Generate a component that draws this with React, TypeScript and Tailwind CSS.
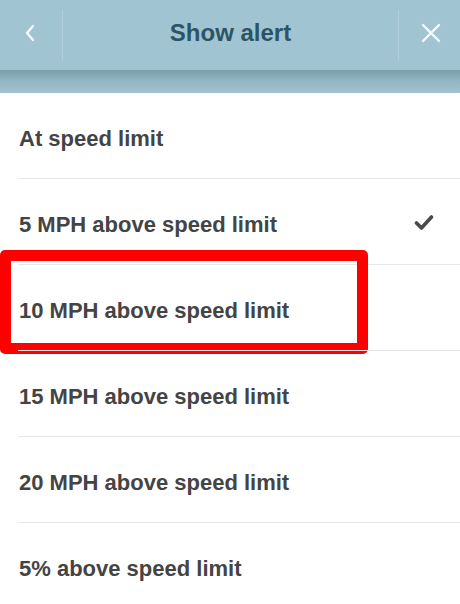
import React from "react";

const items = [
  { label: "At speed limit", checked: false },
  { label: "5 MPH above speed limit", checked: true },
  { label: "10 MPH above speed limit", checked: false, highlight: true },
  { label: "15 MPH above speed limit", checked: false },
  { label: "20 MPH above speed limit", checked: false },
  { label: "5% above speed limit", checked: false },
];

export default function App() {
  return (
    <div
      className="w-[460px] h-[604px] overflow-hidden bg-white"
      style={{ fontFamily: '"Liberation Sans", Arial, sans-serif' }}
    >
      <div className="h-[70px] bg-[#a1c4d2] flex items-center pb-[5px]">
        <div className="w-[62px] h-full flex items-center justify-center">
          <svg width="14" height="18" viewBox="0 0 14 18" className="ml-[-2px]">
            <path d="M10 2 L4 9 L10 16" fill="none" stroke="#f4fafc" strokeWidth="2.4" strokeLinecap="round" strokeLinejoin="round" />
          </svg>
        </div>
        <div className="w-px h-[50px] bg-[#b2d0db] mt-[5px]" />
        <div className="flex-1 text-center text-[24px] font-bold text-[#2d5465]">Show alert</div>
        <div className="w-px h-[50px] bg-[#b2d0db] mt-[5px]" />
        <div className="w-[61px] h-full flex items-center justify-center">
          <svg width="20" height="20" viewBox="0 0 20 20" className="ml-[2px]">
            <path d="M2 2 L18 18 M18 2 L2 18" fill="none" stroke="#f4fafc" strokeWidth="2.4" strokeLinecap="round" />
          </svg>
        </div>
      </div>
      <div className="h-[23px] bg-gradient-to-b from-[#7c9fac] via-[#94b7c4] to-[#a2c3cf]" />
      <div className="flex flex-col">
        {items.map((it, i) => (
          <div key={i} className="relative">
            {i > 0 && <div className="ml-[18px] h-px bg-[#e6e6e6]" />}
            <div className="flex items-center justify-between pl-[19px] pr-[26px] h-[85px] pt-[6px]">
              <span className="text-[22px] font-bold text-[#444444]">{it.label}</span>
              {it.checked && (
                <svg width="20" height="17" viewBox="0 0 20 17" className="mt-[-4px]">
                  <path d="M2.5 9 L7.5 14 L17.5 3" fill="none" stroke="#4a4a4a" strokeWidth="3.6" strokeLinecap="round" strokeLinejoin="round" />
                </svg>
              )}
            </div>
            {it.highlight && (
              <div className="absolute left-0 top-[-14px] w-[368px] h-[104px] border-[11px] border-[#ff0000] rounded-[5px]" />
            )}
          </div>
        ))}
      </div>
    </div>
  );
}
